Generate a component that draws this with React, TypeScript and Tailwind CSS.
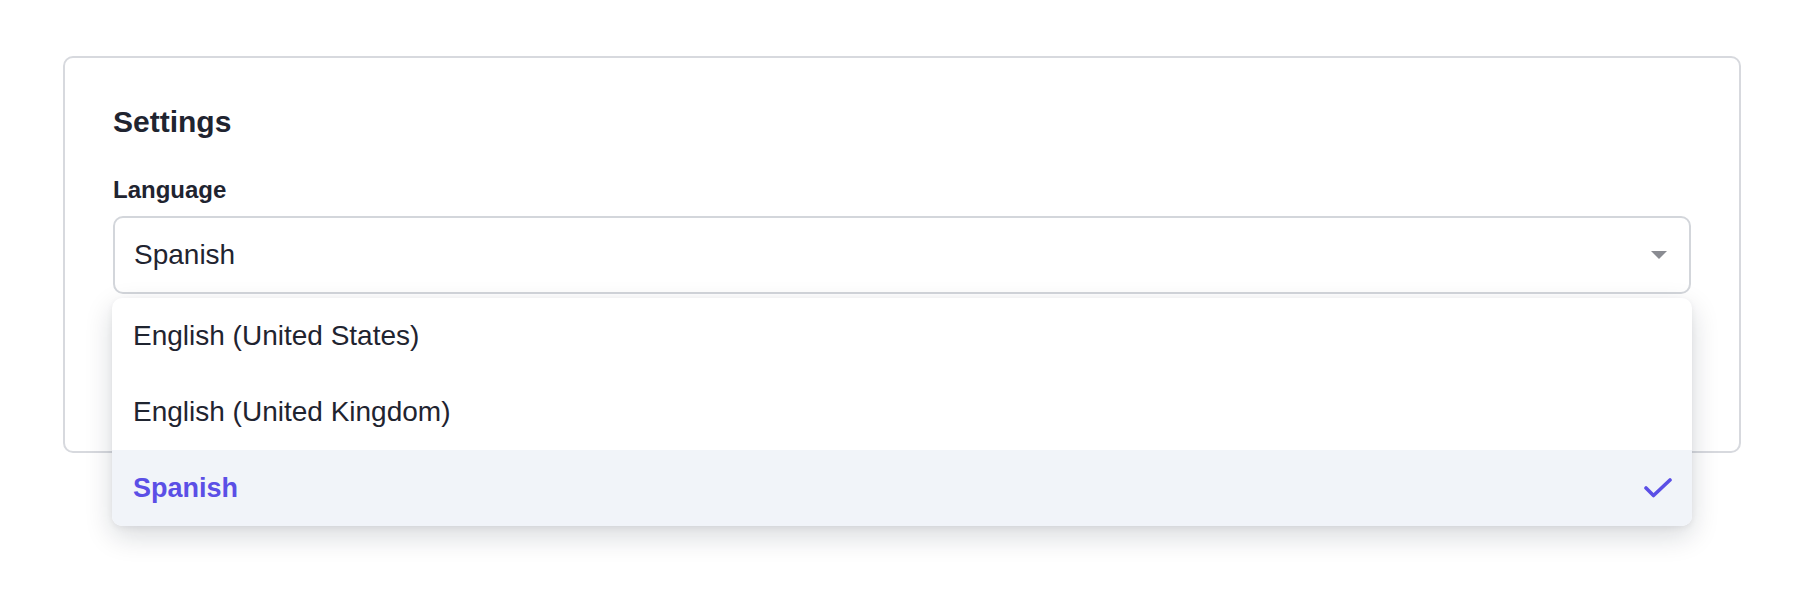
import { useState } from "react";

const languages = [
  { value: "en-US", label: "English (United States)" },
  { value: "en-GB", label: "English (United Kingdom)" },
  { value: "es", label: "Spanish" },
];

export default function App() {
  const [selected, setSelected] = useState("es");
  const [open, setOpen] = useState(true);

  const current = languages.find((l) => l.value === selected);

  return (
    <div
      className="min-h-[592px] w-[1800px] bg-white pl-[63px] pt-[56px] text-[#1f2430]"
      style={{ fontFamily: '"Liberation Sans", Arial, sans-serif' }}
    >
      <div className="w-[1678px] rounded-[10px] border-2 border-[#d7d9de] bg-white px-[48px] pt-[46px] pb-[157px]">
        <h2 className="text-[30px] leading-[36px] font-bold text-[#1f2430]">Settings</h2>

        <label className="mt-[34px] block text-[24px] leading-[32px] font-bold text-[#1f2430]">
          Language
        </label>

        <div className="relative mt-[10px]">
          <button
            onClick={() => setOpen(!open)}
            className="flex h-[78px] w-full items-center justify-between rounded-[10px] border-2 border-[#d3d6db] bg-white pl-[19px] pr-[20px] text-left text-[28px] text-[#1f2430]"
          >
            <span>{current?.label}</span>
            <svg width="16" height="8" viewBox="0 0 16 8" className="mr-[2px]">
              <path d="M0 0 L16 0 L8 8 Z" fill="#8a8c92" />
            </svg>
          </button>

          {open && (
            <ul className="absolute top-[82px] left-[-1px] z-10 w-[1580px] overflow-hidden rounded-[10px] bg-white shadow-[0_10px_28px_rgba(15,23,42,0.16),0_2px_6px_rgba(15,23,42,0.06)]">
              {languages.map((lang) => {
                const isSel = lang.value === selected;
                return (
                  <li
                    key={lang.value}
                    onClick={() => {
                      setSelected(lang.value);
                      setOpen(false);
                    }}
                    className={
                      isSel
                        ? "flex h-[76px] items-center justify-between bg-[#f1f4f9] pl-[21px] pr-[20px] text-[27px] font-bold text-[#5b4fe6]"
                        : "flex h-[76px] items-center justify-between pl-[21px] pr-[20px] text-[28px] text-[#1f2430]"
                    }
                  >
                    <span>{lang.label}</span>
                    {isSel && (
                      <svg width="28" height="20" viewBox="0 0 28 20" fill="none">
                        <path
                          d="M2 10 L9.5 17.5 L26 2"
                          stroke="#5b4fe6"
                          strokeWidth="3.6"
                          strokeLinecap="round"
                          strokeLinejoin="round"
                        />
                      </svg>
                    )}
                  </li>
                );
              })}
            </ul>
          )}
        </div>
      </div>
    </div>
  );
}
